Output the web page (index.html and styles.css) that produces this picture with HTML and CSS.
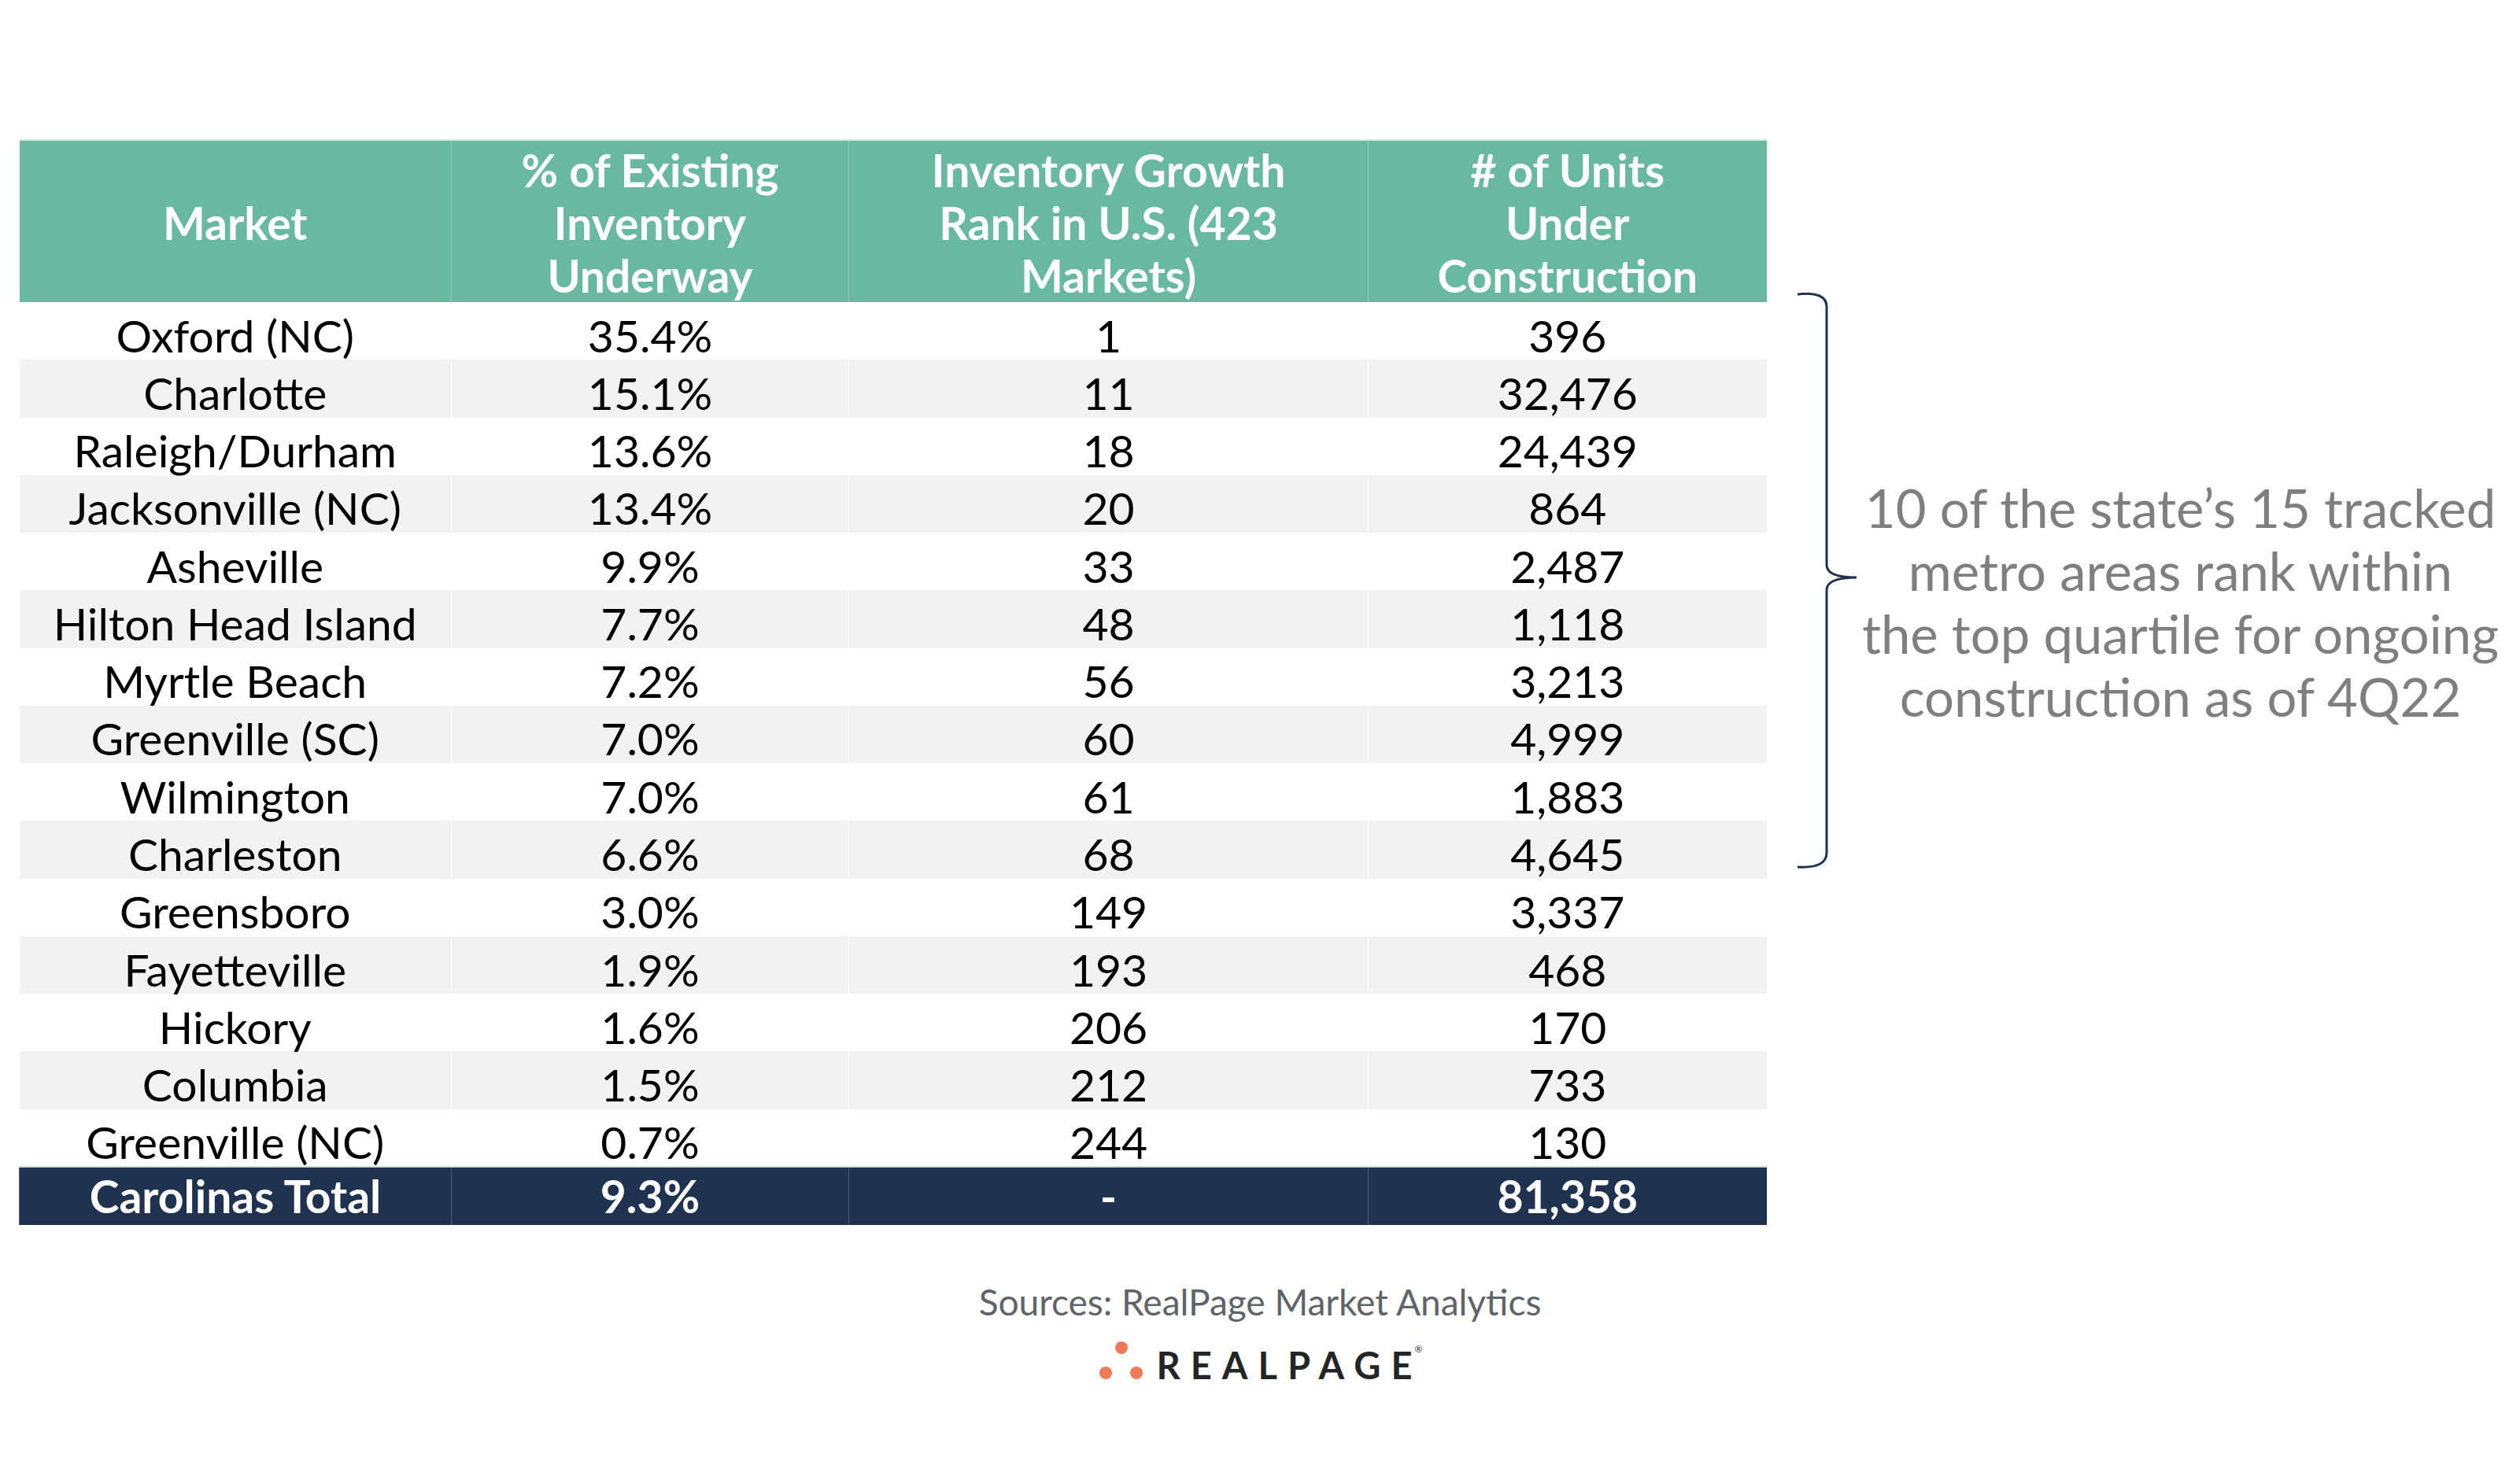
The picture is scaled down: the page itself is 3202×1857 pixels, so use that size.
FILE: index.html
```html
<!DOCTYPE html>
<html>
<head>
<meta charset="utf-8">
<link rel="stylesheet" href="styles.css">
</head>
<body>
<div class="page">
  <div class="main">
    <table class="data">
      <colgroup>
        <col class="c1"><col class="c2"><col class="c3"><col class="c4">
      </colgroup>
      <thead>
        <tr>
          <th>Market</th>
          <th>% of Existing<br>Inventory<br>Underway</th>
          <th>Inventory Growth<br>Rank in U.S. (423<br>Markets)</th>
          <th># of Units<br>Under<br>Construction</th>
        </tr>
      </thead>
      <tbody>
        <tr><td>Oxford (NC)</td><td>35.4%</td><td>1</td><td>396</td></tr>
        <tr class="alt"><td>Charlotte</td><td>15.1%</td><td>11</td><td>32,476</td></tr>
        <tr><td>Raleigh/Durham</td><td>13.6%</td><td>18</td><td>24,439</td></tr>
        <tr class="alt"><td>Jacksonville (NC)</td><td>13.4%</td><td>20</td><td>864</td></tr>
        <tr><td>Asheville</td><td>9.9%</td><td>33</td><td>2,487</td></tr>
        <tr class="alt"><td>Hilton Head Island</td><td>7.7%</td><td>48</td><td>1,118</td></tr>
        <tr><td>Myrtle Beach</td><td>7.2%</td><td>56</td><td>3,213</td></tr>
        <tr class="alt"><td>Greenville (SC)</td><td>7.0%</td><td>60</td><td>4,999</td></tr>
        <tr><td>Wilmington</td><td>7.0%</td><td>61</td><td>1,883</td></tr>
        <tr class="alt"><td>Charleston</td><td>6.6%</td><td>68</td><td>4,645</td></tr>
        <tr><td>Greensboro</td><td>3.0%</td><td>149</td><td>3,337</td></tr>
        <tr class="alt"><td>Fayetteville</td><td>1.9%</td><td>193</td><td>468</td></tr>
        <tr><td>Hickory</td><td>1.6%</td><td>206</td><td>170</td></tr>
        <tr class="alt"><td>Columbia</td><td>1.5%</td><td>212</td><td>733</td></tr>
        <tr><td>Greenville (NC)</td><td>0.7%</td><td>244</td><td>130</td></tr>
        <tr class="total"><td>Carolinas Total</td><td>9.3%</td><td>-</td><td>81,358</td></tr>
      </tbody>
    </table>
    <div class="annot">
      <svg class="brace" width="80" height="732" viewBox="0 0 80 732">
        <path d="M3 2 Q40 -2 40 18 L40 346 Q40 362 78 362 Q40 362 40 378 L40 712 Q40 732 3 730" fill="none" stroke="#1f3250" stroke-width="3"/>
      </svg>
      <p class="note">10 of the state’s 15 tracked<br>metro areas rank within<br>the top quartile for ongoing<br>construction as of 4Q22</p>
    </div>
  </div>
  <footer class="foot">
    <p class="sources">Sources: RealPage Market Analytics</p>
    <div class="logo">
      <svg class="dots" width="60" height="60" viewBox="0 0 60 60">
        <circle cx="30" cy="12" r="8" fill="#ef7a58"/>
        <circle cx="10" cy="44" r="8" fill="#ef7a58"/>
        <circle cx="49" cy="44" r="8" fill="#ef7a58"/>
      </svg>
      <span class="brand">REALPAG<span class="last">E</span></span><span class="reg">®</span>
    </div>
  </footer>
</div>
</body>
</html>
```

FILE: styles.css
```css
html, body {
  margin: 0;
  padding: 0;
  background: #ffffff;
}

body {
  width: 3202px;
  height: 1857px;
  overflow: hidden;
  font-family: Lato, "Liberation Sans", sans-serif;
}

.page {
  display: flex;
  flex-direction: column;
}

.main {
  display: flex;
  align-items: flex-start;
  padding: 177px 0 0 24px;
}

.data {
  border-collapse: collapse;
  table-layout: fixed;
  width: 2220px;
  font-size: 57px;
  border-top: 2px solid #d4e6df;
}

.c1 { width: 549px; }
.c2 { width: 505px; }
.c3 { width: 660px; }
.c4 { width: 506px; }

.data th {
  background: #69b8a0;
  color: #ffffff;
  font-weight: 700;
  height: 206px;
  padding: 4px 0 0 0;
  box-sizing: border-box;
  line-height: 67px;
  text-align: center;
  vertical-align: middle;
  border-left: 1px solid #8ecdb8;
}

.data th:first-child,
.data td:first-child {
  border-left: none;
}

.data td {
  height: 73.27px;
  padding: 10px 0 0 0;
  box-sizing: border-box;
  text-align: center;
  vertical-align: middle;
  color: #000000;
  font-weight: 400;
  line-height: 60px;
  border-left: 1px solid #ffffff;
}

.data tr.alt td {
  background: #f2f2f2;
}

.data tr.total td {
  height: 74px;
  padding: 0;
  background: #1f3250;
  color: #ffffff;
  font-weight: 700;
  border-left: 1px solid #4c5d78;
  border-top: 2px solid #d3d8df;
}

.annot {
  display: flex;
  align-items: center;
  margin-top: 195px;
  height: 732px;
}

.brace {
  display: block;
  margin-left: 36px;
}

.note {
  margin: 0;
  padding-top: 54px;
  width: 820px;
  font-size: 67px;
  line-height: 80px;
  font-weight: 400;
  color: #7f7f7f;
  text-align: center;
  white-space: nowrap;
}

.foot {
  display: flex;
  flex-direction: column;
  align-items: center;
  width: 3202px;
  padding-top: 60px;
}

.sources {
  margin: 0;
  font-size: 46px;
  line-height: 76px;
  color: #5f6468;
}

.logo {
  display: flex;
  align-items: center;
  margin-top: 4px;
}

.dots {
  display: block;
  margin-right: 15px;
}

.brand {
  font-family: Lato, "Liberation Sans", sans-serif;
  font-weight: 700;
  font-size: 47px;
  letter-spacing: 13px;
  color: #242526;
  line-height: 60px;
  padding-top: 8px;
}

.brand .last {
  letter-spacing: 0;
}

.reg {
  font-size: 12px;
  color: #242526;
  align-self: flex-start;
  margin-left: 3px;
  margin-top: 10px;
}
```
